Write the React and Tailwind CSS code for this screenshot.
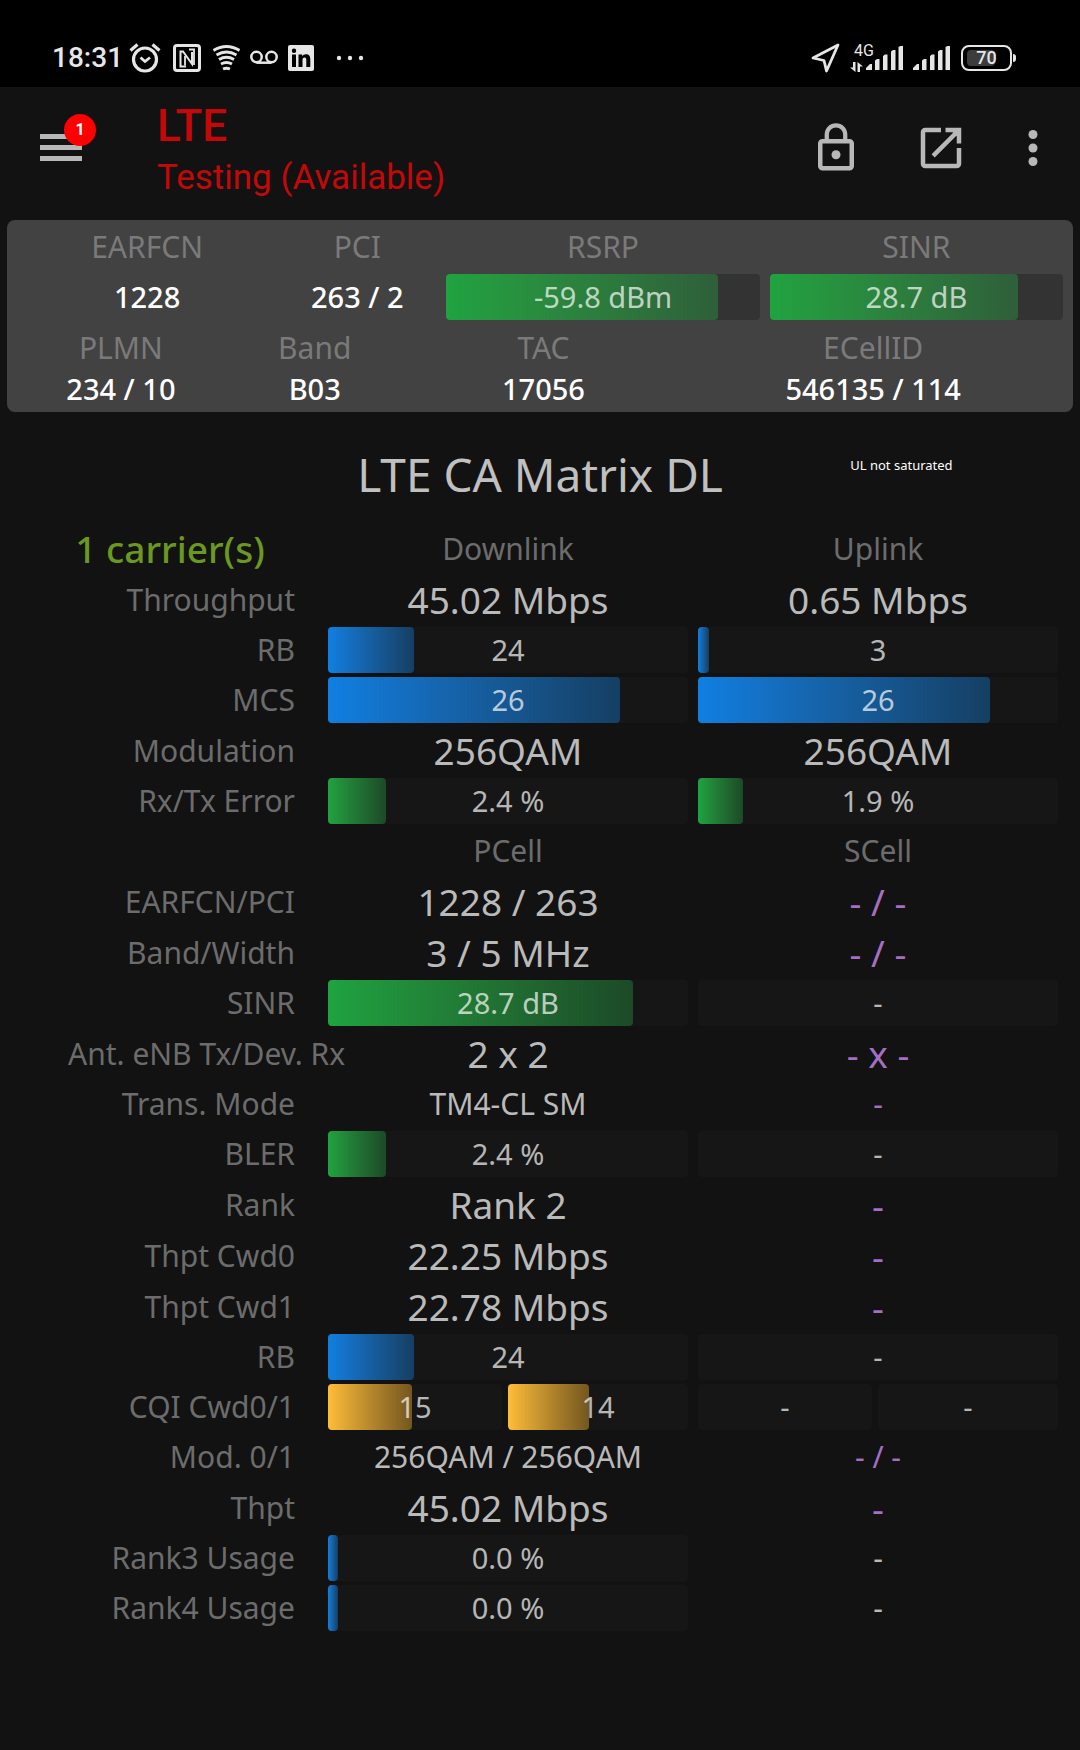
import clsx from "clsx";

const fills = {
  blue: "from-[#107fe2] to-[#153f63]",
  green: "from-[#1fa340] to-[#1c4a27]",
  amber: "from-[#ffbd38] to-[#74571f]",
};

const rows = [
  { label: "Throughput", cells: [{ big: "45.02 Mbps" }, { big: "0.65 Mbps" }] },
  { label: "RB", cells: [{ bar: "24", fill: 24, color: "blue" }, { bar: "3", fill: 3, color: "blue" }] },
  { label: "MCS", cells: [{ bar: "26", fill: 81, color: "blue" }, { bar: "26", fill: 81, color: "blue" }] },
  { label: "Modulation", cells: [{ big: "256QAM" }, { big: "256QAM" }] },
  { label: "Rx/Tx Error", cells: [{ bar: "2.4 %", fill: 16, color: "green" }, { bar: "1.9 %", fill: 12.5, color: "green" }] },
  { label: "", cells: [{ head: "PCell" }, { head: "SCell" }] },
  { label: "EARFCN/PCI", cells: [{ big: "1228 / 263" }, { big: "- / -", empty: true }] },
  { label: "Band/Width", cells: [{ big: "3 / 5 MHz" }, { big: "- / -", empty: true }] },
  { label: "SINR", cells: [{ bar: "28.7 dB", fill: 84.7, color: "green" }, { bar: "-" }] },
  { label: "Ant. eNB Tx/Dev. Rx", cells: [{ big: "2 x 2" }, { big: "- x -", empty: true }] },
  { label: "Trans. Mode", cells: [{ small: "TM4-CL SM" }, { small: "-", empty: true }] },
  { label: "BLER", cells: [{ bar: "2.4 %", fill: 16, color: "green" }, { bar: "-" }] },
  { label: "Rank", cells: [{ big: "Rank 2" }, { big: "-", empty: true }] },
  { label: "Thpt Cwd0", cells: [{ big: "22.25 Mbps" }, { big: "-", empty: true }] },
  { label: "Thpt Cwd1", cells: [{ big: "22.78 Mbps" }, { big: "-", empty: true }] },
  { label: "RB", cells: [{ bar: "24", fill: 24, color: "blue" }, { bar: "-" }] },
  {
    label: "CQI Cwd0/1",
    cells: [
      { pair: [{ bar: "15", fill: 48.3, color: "amber" }, { bar: "14", fill: 45, color: "amber" }] },
      { pair: [{ bar: "-" }, { bar: "-" }] },
    ],
  },
  { label: "Mod. 0/1", cells: [{ small: "256QAM / 256QAM" }, { small: "- / -", empty: true }] },
  { label: "Thpt", cells: [{ big: "45.02 Mbps" }, { big: "-", empty: true }] },
  { label: "Rank3 Usage", cells: [{ bar: "0.0 %", fill: 2.8, color: "blue" }, { small: "-" }] },
  { label: "Rank4 Usage", cells: [{ bar: "0.0 %", fill: 2.8, color: "blue" }, { small: "-" }] },
];

function Bar({ text, fill = 0, fillClass, trackClass = "bg-[#161616]" }) {
  return (
    <div className={clsx("relative h-[46px] rounded-sm text-center text-[29px] leading-[46px]", trackClass)}>
      <div
        className={clsx("absolute inset-y-0 left-0 rounded-sm bg-linear-to-r", fillClass)}
        style={{ width: `${fill}%` }}
      />
      <span className="relative text-white/70">{text}</span>
    </div>
  );
}

function Cell({ cell }) {
  if (cell.pair) {
    return (
      <div className="grid grid-cols-2">
        <div className="pr-1.5">
          <Bar text={cell.pair[0].bar} fill={cell.pair[0].fill} fillClass={fills[cell.pair[0].color]} />
        </div>
        <Bar text={cell.pair[1].bar} fill={cell.pair[1].fill} fillClass={fills[cell.pair[1].color]} />
      </div>
    );
  }
  if (cell.bar) return <Bar text={cell.bar} fill={cell.fill} fillClass={fills[cell.color]} />;
  if (cell.head) return <div className="leading-[46px] text-[#6c6c6c]">{cell.head}</div>;
  return (
    <div
      className={clsx(
        cell.big ? "text-[37px] leading-[47px]" : "leading-[46px]",
        cell.empty ? "text-[#a56fc4]" : "text-[#bababa]"
      )}
    >
      {cell.big || cell.small}
    </div>
  );
}

function SignalBars() {
  return (
    <svg className="h-6 w-[37px]" viewBox="0 0 37 24" fill="#e6e6e6">
      <path d="M0 24v-2l4-4h2v6zM9 24V14.500l2-1.500h2.500v11zM17 24V10l2-1.500h2.500V24zM25 24V5.500L27 4h2.500v20zM32.500 24V1l2-1H37v24z" />
    </svg>
  );
}

function StatusBar() {
  return (
    <div className="flex h-[87px] items-center justify-between bg-black pt-7 pr-16 pl-[52px] font-['Roboto',sans-serif] text-[#e6e6e6]">
      <div className="flex items-center">
        <span className="text-[28px] leading-none font-medium">18:31</span>
        <svg className="ml-1.5 h-[30px] w-8" viewBox="0 0 32 30" fill="none" stroke="#e6e6e6" strokeWidth="3.200">
          <circle cx="16" cy="16.500" r="11.500" />
          <path d="M1.500 7.500 8.500 1.500M30.500 7.500 23.500 1.500" />
          <path d="m11.500 14.500 4.500 4 5-4" strokeWidth="2.800" />
        </svg>
        <svg className="ml-3 h-7 w-7" viewBox="0 0 28 28" fill="none" stroke="#e6e6e6">
          <rect x="1.500" y="1.500" width="25" height="25" rx="2.500" strokeWidth="3" />
          <path d="M13 22.500H7.500V7.500H10L19 20V8" strokeWidth="2" />
          <path d="M16 5.500h5v15.500M12 21.500V12" strokeWidth="1.800" />
        </svg>
        <svg className="ml-3 h-[26px] w-[27px]" viewBox="0 0 27 26" fill="none" stroke="#e6e6e6" strokeWidth="2.900">
          <path d="M.5 5.500Q13.500-2.500 26.500 5.500M3.500 10Q13.500 4 23.500 10M6 14.500Q13.500 10 21 14.500M8 19Q13.500 16 19 19M10 24Q13.500 22.500 17 24" />
        </svg>
        <svg className="ml-2.5 h-7 w-7" viewBox="0 0 28 28" fill="none" stroke="#e6e6e6" strokeWidth="2.500">
          <circle cx="6.500" cy="13" r="5.200" />
          <circle cx="21.500" cy="13" r="5.200" />
          <path d="M6.500 18.700h15" />
        </svg>
        <svg className="ml-2.5 h-[26px] w-[26px]" viewBox="0 0 26 26">
          <rect width="26" height="26" rx="2" fill="#e6e6e6" />
          <path d="M4 9.500h4V22H4zM10.500 9.500h3.700v1.800c.8-1.300 2.100-2.100 3.800-2.100 3.300 0 4.300 2.100 4.300 5.200V22h-4v-6.800c0-1.600-.4-2.700-1.700-2.700-1.500 0-2.100 1.100-2.100 2.700V22h-4z" />
          <circle cx="6" cy="5.800" r="2.200" />
        </svg>
        <svg className="ml-[22px] h-1.5 w-7" viewBox="0 0 28 6" fill="#e6e6e6">
          <circle cx="3" cy="3" r="2.200" />
          <circle cx="14" cy="3" r="2.200" />
          <circle cx="25" cy="3" r="2.200" />
        </svg>
      </div>
      <div className="flex items-center">
        <svg className="h-[30px] w-[29px]" viewBox="0 0 29 30" fill="none" stroke="#e6e6e6" strokeWidth="2.800" strokeLinejoin="round">
          <path d="M27 2 2 15l11 2.500L15.500 28z" />
        </svg>
        <div className="ml-2.5 flex flex-col">
          <span className="ml-1 text-base leading-[14px]">4G</span>
          <svg className="mt-1 h-2.5 w-[13px]" viewBox="0 0 13 10" fill="#e6e6e6">
            <path d="M3 0h2.500v10L0 5.500h3zM7.500 0 13 4.500h-3V10H7.500z" />
          </svg>
        </div>
        <div className="-ml-2 flex gap-2.5">
          <SignalBars />
          <SignalBars />
        </div>
        <div className="relative ml-[11px] flex h-[26px] w-[51px] items-center justify-center rounded-lg border-2 border-[#e6e6e6]">
          <div className="absolute top-[3px] bottom-[3px] left-1 w-7 rounded-sm bg-[#3c3c3c]" />
          <span className="relative text-lg leading-none font-medium">70</span>
        </div>
        <div className="ml-px h-2 w-[3px] rounded-r-sm bg-[#e6e6e6]" />
      </div>
    </div>
  );
}

function AppHeader() {
  return (
    <header className="flex h-[133px] items-center pr-5 pl-10 font-['Roboto',sans-serif]">
      <button type="button" aria-label="Menu" className="relative flex w-[42px] flex-col gap-1.5 pb-3">
        <span className="h-[5px] bg-[#b8b8b8]" />
        <span className="h-[5px] bg-[#b8b8b8]" />
        <span className="h-[5px] bg-[#b8b8b8]" />
        <span className="absolute -top-5 left-6 flex h-8 w-8 items-center justify-center rounded-full bg-[#ff0000] text-base font-bold text-white">
          1
        </span>
      </button>
      <div className="ml-[75px] grow text-[#c20808]">
        <h1 className="text-[44px] leading-[52px] font-medium">LTE</h1>
        <p className="pb-1 text-[35px] leading-[52px]">Testing (Available)</p>
      </div>
      <div className="flex items-center pb-3">
        <button type="button" aria-label="Lock">
          <svg className="h-[54px] w-[54px]" viewBox="0 0 24 24" fill="none" stroke="#b8b8b8" strokeWidth="2">
            <rect x="5" y="9" width="14" height="12" rx="1" />
            <path d="M7.900 9V6a4.100 4.100 0 0 1 8.200 0v3" strokeWidth="1.900" />
            <circle cx="12" cy="15" r="2" fill="#b8b8b8" stroke="none" />
          </svg>
        </button>
        <button type="button" aria-label="Open in new window" className="ml-[51px]">
          <svg className="h-[54px] w-[54px]" viewBox="0 0 24 24" fill="none" stroke="#b8b8b8" strokeWidth="2">
            <path d="M12 4H5a1 1 0 0 0-1 1v14a1 1 0 0 0 1 1h14a1 1 0 0 0 1-1v-7" />
            <path d="M14 4h6v6M20 4 8.500 15.500" />
            <path d="M17 4h3v3z" fill="#b8b8b8" strokeWidth="1" />
          </svg>
        </button>
        <button type="button" aria-label="More options" className="ml-[38px]">
          <svg className="h-[54px] w-[54px]" viewBox="0 0 54 54" fill="#b8b8b8">
            <circle cx="27" cy="13.500" r="4.500" />
            <circle cx="27" cy="27" r="4.500" />
            <circle cx="27" cy="40.500" r="4.500" />
          </svg>
        </button>
      </div>
    </header>
  );
}

function SummaryItem({ label, value }) {
  return (
    <div>
      <dt className="text-[30px] leading-10 text-[#7a7a7a]">{label}</dt>
      <dd className="font-medium text-white">{value}</dd>
    </div>
  );
}

function SummaryCard() {
  return (
    <section className="mx-[7px] rounded-lg bg-[#424242] pt-[7px] pb-0.5 pl-[19px] text-center text-[29px]">
      <dl className="grid grid-cols-[242fr_178fr_323fr_303fr] leading-[46px]">
        <div>
          <dt className="pb-[7px] text-[30px] leading-10 text-[#7a7a7a]">EARFCN</dt>
          <dd className="font-medium text-white">1228</dd>
        </div>
        <div>
          <dt className="pb-[7px] text-[30px] leading-10 text-[#7a7a7a]">PCI</dt>
          <dd className="font-medium text-white">263 / 2</dd>
        </div>
        <div className="pr-2.5">
          <dt className="pb-[7px] text-[30px] leading-10 text-[#7a7a7a]">RSRP</dt>
          <dd>
            <Bar text="-59.8 dBm" fill={86.6} fillClass="from-[#1fa340] to-[#2e5f39]" trackClass="bg-[#333]" />
          </dd>
        </div>
        <div className="pr-2.5">
          <dt className="pb-[7px] text-[30px] leading-10 text-[#7a7a7a]">SINR</dt>
          <dd>
            <Bar text="28.7 dB" fill={84.6} fillClass="from-[#1fa340] to-[#2e5f39]" trackClass="bg-[#333]" />
          </dd>
        </div>
      </dl>
      <dl className="grid grid-cols-[190fr_198fr_260fr_400fr] pt-2 leading-[42px]">
        <SummaryItem label="PLMN" value="234 / 10" />
        <SummaryItem label="Band" value="B03" />
        <SummaryItem label="TAC" value="17056" />
        <SummaryItem label="ECellID" value="546135 / 114" />
      </dl>
    </section>
  );
}

export default function App() {
  return (
    <div className="min-h-screen bg-[#121212] font-['Noto_Sans',sans-serif] text-[30px]">
      <StatusBar />
      <AppHeader />
      <SummaryCard />
      <main>
        <div className="grid h-[114px] grid-cols-[1fr_auto_1fr] items-center pt-2.5">
          <h2 className="col-start-2 text-[46px] text-[#c0c0c0]">LTE CA Matrix DL</h2>
          <p className="pb-4 text-center text-[13px] text-white">UL not saturated</p>
        </div>
        <div className="pr-3">
          <table className="w-full table-fixed border-collapse text-center whitespace-nowrap">
            <thead>
              <tr>
                <th className="w-[328px] p-0 pr-[33px] pb-1 pl-[45px] text-[37px] leading-[46px] font-medium text-[#6b981f]">
                  1 carrier(s)
                </th>
                <th className="p-0 pr-2.5 pb-1 leading-[46px] font-normal text-[#6c6c6c]">Downlink</th>
                <th className="p-0 pr-2.5 pb-1 leading-[46px] font-normal text-[#6c6c6c]">Uplink</th>
              </tr>
            </thead>
            <tbody>
              {rows.map((row, i) => (
                <tr key={i}>
                  <th className="p-0 pr-[33px] pb-1 pl-[68px] text-right leading-[46px] font-normal text-[#6c6c6c]">
                    {row.label}
                  </th>
                  {row.cells.map((cell, j) => (
                    <td key={j} className="p-0 pr-2.5 pb-1">
                      <Cell cell={cell} />
                    </td>
                  ))}
                </tr>
              ))}
            </tbody>
          </table>
        </div>
      </main>
    </div>
  );
}
